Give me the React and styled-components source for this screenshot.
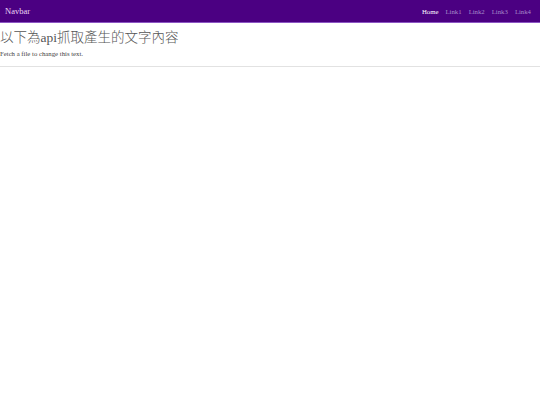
import React from "react";
import styled, { createGlobalStyle } from "styled-components";

const GlobalStyle = createGlobalStyle`
  html, body {
    margin: 0;
    padding: 0;
    background: #ffffff;
    font-family: "Liberation Serif", "Noto Sans CJK TC", serif;
  }
`;

const links = ["Link1", "Link2", "Link3", "Link4"];

function App() {
  return (
    <>
      <GlobalStyle />
      <Navbar>
        <Brand>Navbar</Brand>
        <NavList>
          <NavLink $active>Home</NavLink>
          {links.map((label) => (
            <NavLink key={label}>{label}</NavLink>
          ))}
        </NavList>
      </Navbar>
      <Main>
        <Title>以下為api抓取產生的文字內容</Title>
        <Text>Fetch a file to change this text.</Text>
        <Rule />
      </Main>
    </>
  );
}

const Navbar = styled.nav`
  display: flex;
  align-items: center;
  justify-content: space-between;
  height: 22px;
  padding: 0 9px 0 5px;
  background-color: #4b0082;
  border-bottom: 1px solid #8c55c4;
`;

const Brand = styled.a`
  color: #ead6f5;
  font-size: 8.5px;
`;

const NavList = styled.div`
  display: flex;
  align-items: center;
  gap: 7px;
`;

const NavLink = styled.a`
  color: ${(p) => (p.$active ? "#ffffff" : "#a68bc9")};
  font-size: 6.75px;
`;

const Main = styled.main`
  display: flex;
  flex-direction: column;
`;

const Title = styled.h1`
  margin: 7px 0 0;
  font-family: "Liberation Serif", "Noto Sans CJK TC", serif;
  font-size: 13.5px;
  font-weight: 300;
  line-height: 16px;
  color: #555555;
`;

const Text = styled.p`
  margin: 4px 0 0;
  font-size: 6.75px;
  line-height: 8px;
  color: #444444;
`;

const Rule = styled.hr`
  width: 100%;
  margin: 8px 0 0;
  border: 0;
  border-top: 1px solid #e2e2e2;
`;

export default App;
